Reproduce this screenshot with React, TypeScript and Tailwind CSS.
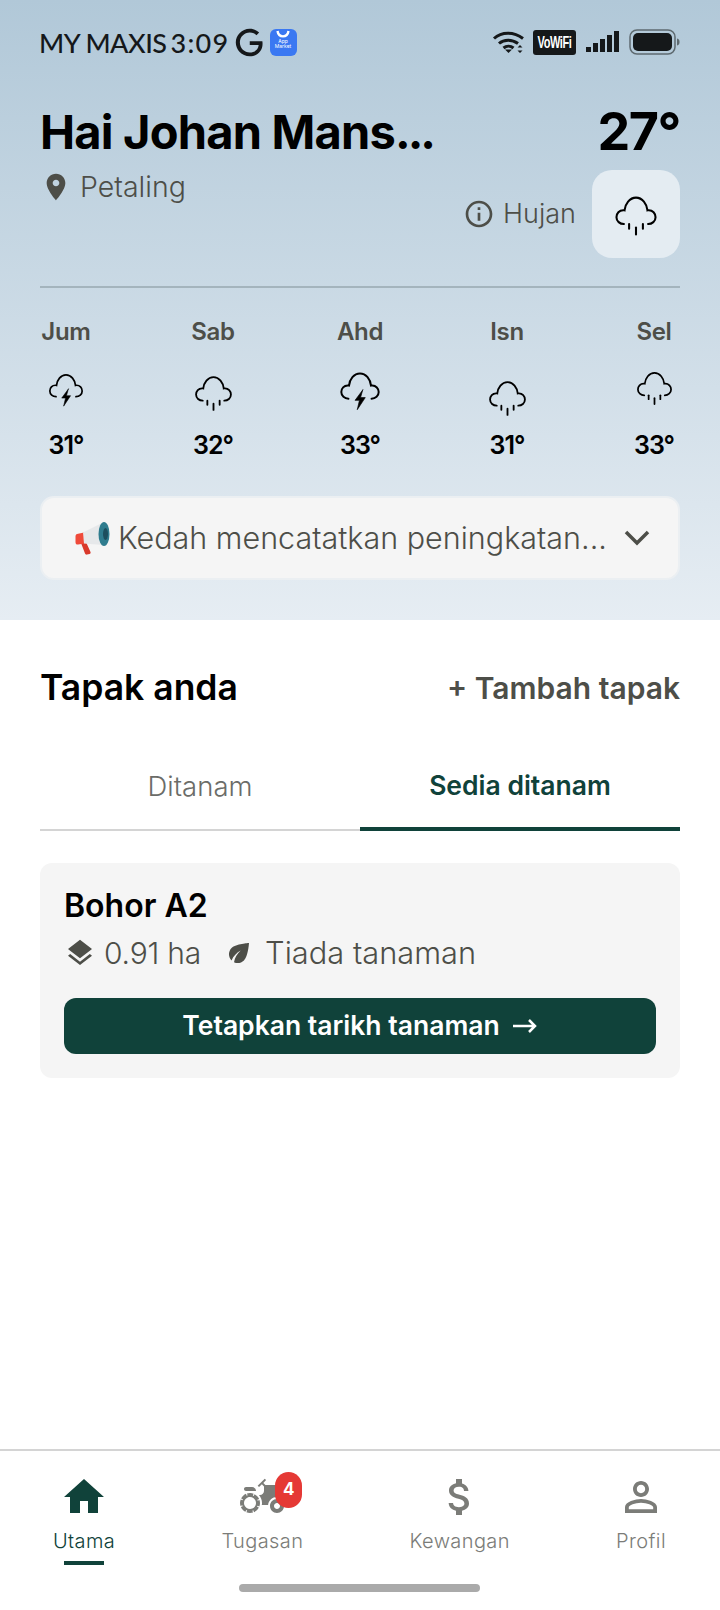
import React from 'react';

const INK = '#4d4e48';
const GREEN = '#10423a';

const PATHS = {
  pin: 'M12 2C8.13 2 5 5.13 5 9c0 5.25 7 13 7 13s7-7.75 7-13c0-3.87-3.13-7-7-7zm0 9.5c-1.38 0-2.5-1.12-2.5-2.5s1.12-2.5 2.5-2.5 2.5 1.12 2.5 2.5-1.12 2.5-2.5 2.5z',
  info: 'M11 7h2v2h-2zm0 4h2v6h-2zm1-9C6.48 2 2 6.48 2 12s4.48 10 10 10 10-4.48 10-10S17.52 2 12 2zm0 18c-4.41 0-8-3.59-8-8s3.59-8 8-8 8 3.59 8 8-3.59 8-8 8z',
  layers: 'M11.99 18.54l-7.37-5.73L3 14.07l9 7 9-7-1.63-1.27-7.38 5.74zM12 16l7.36-5.73L21 9l-9-7-9 7 1.63 1.27L12 16z',
  leaf: 'M6.05 8.05c-2.73 2.73-2.73 7.15-.02 9.88 1.47-3.4 4.09-6.24 7.36-7.93-2.77 2.34-4.71 5.61-5.39 9.32 2.6 1.23 5.8.78 7.95-1.37C19.43 14.47 20 4 20 4S9.53 4.57 6.05 8.05z',
  home: 'M10 20v-6h4v6h5v-8h3L12 3 2 12h3v8z',
  money: 'M11.8 10.9c-2.27-.59-3-1.2-3-2.15 0-1.09 1.01-1.85 2.7-1.85 1.78 0 2.44.85 2.5 2.1h2.21c-.07-1.72-1.12-3.3-3.21-3.81V3h-3v2.16c-1.94.42-3.5 1.68-3.5 3.61 0 2.31 1.91 3.46 4.7 4.13 2.5.6 3 1.48 3 2.41 0 .69-.49 1.79-2.7 1.79-2.06 0-2.87-.92-2.98-2.1h-2.2c.12 2.19 1.76 3.42 3.68 3.83V21h3v-2.15c1.95-.37 3.5-1.5 3.5-3.55 0-2.84-2.43-3.81-4.7-4.4z',
  person: 'M12 5.9c1.16 0 2.1.94 2.1 2.1s-.94 2.1-2.1 2.1S9.9 9.16 9.9 8s.94-2.1 2.1-2.1m0 9c2.97 0 6.1 1.46 6.1 2.1v1.1H5.9V17c0-.64 3.13-2.1 6.1-2.1M12 4C9.79 4 8 5.79 8 8s1.79 4 4 4 4-1.79 4-4-1.79-4-4-4zm0 9c-2.67 0-8 1.34-8 4v3h16v-3c0-2.66-5.33-4-8-4z',
  tractor: 'M19.5 12c.93 0 1.78.28 2.5.76V8c0-1.1-.9-2-2-2h-6.29l-1.06-1.06 1.41-1.41-.71-.71-3.53 3.53.71.71 1.41-1.41L13 6.71V9c0 1.1-.9 2-2 2h-.54c.95 1.06 1.54 2.46 1.54 4 0 .34-.04.67-.09 1h3.14c.25-2.25 2.14-4 4.45-4zM19.5 13c-1.93 0-3.5 1.57-3.5 3.5s1.57 3.5 3.5 3.5 3.5-1.57 3.5-3.5-1.57-3.5-3.5-3.5zm0 5c-.83 0-1.5-.67-1.5-1.5s.67-1.5 1.5-1.5 1.5.67 1.5 1.5-.67 1.5-1.5 1.5zM4 9h5c0-1.1-.9-2-2-2H4c-.55 0-1 .45-1 1s.45 1 1 1zM9.83 13.82l-.18-.47.93-.35c-.46-1.06-1.28-1.91-2.31-2.43l-.4.89-.46-.21.4-.9C7.26 10.13 6.64 10 6 10c-.53 0-1.04.11-1.52.26l.34.91-.47.18L4 10.42c-1.06.46-1.91 1.28-2.43 2.31l.89.4-.21.46-.9-.4C1.13 13.74 1 14.36 1 15c0 .53.11 1.04.26 1.52l.91-.34.18.47-.93.35c.46 1.06 1.28 1.91 2.31 2.43l.4-.89.46.21-.4.9c.55.22 1.17.35 1.81.35.53 0 1.04-.11 1.52-.26l-.34-.91.47-.18.35.93c1.06-.46 1.91-1.28 2.43-2.31l-.89-.4.21-.46.9.4c.22-.55.35-1.17.35-1.81 0-.53-.11-1.04-.26-1.52l-.91.34zm-2.68 3.95c-1.53.63-3.29-.09-3.92-1.62-.63-1.53.09-3.29 1.62-3.92 1.53-.63 3.29.09 3.92 1.62.64 1.53-.09 3.29-1.62 3.92z',
  google: 'M21.35 11.1h-9.17v2.73h6.51c-.33 3.81-3.5 5.44-6.5 5.44C8.36 19.27 5 16.25 5 12c0-4.1 3.2-7.27 7.2-7.27 3.09 0 4.9 1.97 4.9 1.97L19 4.72S16.56 2 12.1 2C6.42 2 2.03 6.8 2.03 12c0 5.05 4.13 10 10.22 10 5.35 0 9.25-3.67 9.25-9.09 0-1.15-.15-1.81-.15-1.81z',
};

const Glyph = ({ d, size, color, className }: { d: string; size: number; color: string; className?: string }) => (
  <svg viewBox="0 0 24 24" width={size} height={size} fill={color} className={className}>
    <path d={d} />
  </svg>
);

// open-bottomed cloud, with rain or a bolt under it
const Cloud = ({ kind, size, className }: { kind: 'rain' | 'bolt'; size: number; className?: string }) => (
  <svg viewBox="0 0 40 40" width={size} height={size} fill="none" stroke="#000" strokeWidth="1.8" strokeLinecap="round" className={className}>
    <path d="M9.500 27C6 27 3 24.500 3 21c0-3.300 2.500-6 5.800-6 .4 0 .8 0 1.200.1C10.500 9.500 14.500 4 20 4c5.500 0 9.500 5.500 10 11.100.4-.1.800-.1 1.200-.1 3.200 0 5.800 2.700 5.800 6 0 3.500-3 6-6.500 6" />
    {kind === 'rain' ? (
      <>
        <path d="M14 27v4" />
        <path d="M20 30v6" />
        <path d="M26 27v4" />
      </>
    ) : (
      <path d="M22.500 19l-7 9.500h4L17.500 37l7.300-11h-4.300l2-7z" fill="#000" strokeWidth="0.6" strokeLinejoin="round" />
    )}
  </svg>
);

const StatusBar = () => (
  <div className="flex items-center justify-between h-[30px] ml-[-1px]">
    <div className="flex items-center">
      <span className="font-['Lato',sans-serif] text-[27px] leading-none font-medium text-[#15181a] tracking-[-0.5px]">MY MAXIS</span>
      <span className="ml-[4px] font-['Lato',sans-serif] text-[27px] leading-none font-medium text-[#15181a] tracking-[1.3px]">3:09</span>
      <Glyph d={PATHS.google} size={33} color="#15181a" className="ml-[3px]" />
      <div className="ml-[4px] w-[27px] h-[27px] rounded-[6px] bg-[#3a78f2] flex flex-col items-center overflow-hidden">
        <svg width="14" height="9" viewBox="0 0 14 9" fill="none" stroke="#fff" strokeWidth="2.4" className="mt-[1px]">
          <path d="M1.5 1c.6 3.6 3 5.4 5.5 5.4S11.900 4.600 12.500 1" />
        </svg>
        <span className="text-[5px] leading-[5px] text-white text-center font-['Inter',sans-serif] w-[20px]">App Market</span>
      </div>
    </div>
    <div className="flex items-center">
      <svg width="34" height="26" viewBox="0 0 34 26" fill="none" stroke="#15181a" strokeWidth="3">
        <path d="M2 9.500C9.500 2.500 22 2.500 31 9.500" />
        <path d="M7 14.500c5-4.500 13-4.500 19 0" />
        <path d="M11.500 19c3-2.500 7-2.500 10 0" />
        <path d="M13 20.500l3.500 3.500 3.500-3.500z" fill="#15181a" stroke="none" />
        <path d="M28 16l2.500 2.500h-5zM28 24l2.500-2.500h-5z" fill="#15181a" stroke="none" />
      </svg>
      <div className="ml-[7px] w-[43px] h-[25px] rounded-[3px] bg-[#15181a] flex items-center justify-center">
        <span className="font-['Liberation_Sans',sans-serif] font-bold text-[11px] leading-none text-white tracking-[-0.4px] scale-y-[1.5]">VoWiFi</span>
      </div>
      <svg width="34" height="22" viewBox="0 0 34 22" fill="#15181a" className="ml-[10px]">
        <rect x="0" y="16" width="5" height="5" />
        <rect x="7" y="12" width="5" height="9" />
        <rect x="14" y="8" width="5" height="13" />
        <rect x="21" y="4" width="5" height="17" />
        <rect x="28" y="0" width="5" height="21" />
      </svg>
      <svg width="51" height="26" viewBox="0 0 51 26" className="ml-[9px]">
        <rect x="1" y="1" width="45" height="24" rx="7" fill="none" stroke="#5e6a70" strokeWidth="1.500" />
        <rect x="4" y="4" width="39" height="18" rx="5" fill="#15181a" />
        <path d="M48 9.500c2 .6 2.500 1.800 2.500 3.500s-.5 2.900-2.500 3.500z" fill="#5e6a70" />
      </svg>
    </div>
  </div>
);

const FORECAST: { day: string; temp: string; kind: 'rain' | 'bolt'; size: number; offset: string }[] = [
  { day: 'Jum', temp: '31°', kind: 'bolt', size: 38, offset: 'mt-[0px]' },
  { day: 'Sab', temp: '32°', kind: 'rain', size: 41, offset: 'mt-[2px]' },
  { day: 'Ahd', temp: '33°', kind: 'bolt', size: 44, offset: 'mt-[-2px]' },
  { day: 'Isn', temp: '31°', kind: 'rain', size: 41, offset: 'mt-[7px]' },
  { day: 'Sel', temp: '33°', kind: 'rain', size: 39, offset: 'mt-[-2px]' },
];

const Megaphone = () => (
  <svg width="35" height="34" viewBox="0 0 35 34" className="shrink-0">
    <path d="M6 22l5-1 4.500 10c.4 1-.1 1.800-1 2l-2.500.6c-1 .2-1.700-.2-2-1.100z" fill="#d9392b" />
    <path d="M2 13l7-1.500 1 11-7 1c-1.500.2-2.500-.8-2.500-2.300v-6c0-1.200.8-2 1.500-2.200z" fill="#ef4a3a" />
    <path d="M8 11.500L27 2l1 22-19-1.500z" fill="#e6e8ea" />
    <ellipse cx="29" cy="13" rx="5.500" ry="12" fill="#2f7c8e" />
    <ellipse cx="30.500" cy="13" rx="2.500" ry="6" fill="#1d4f5e" />
  </svg>
);

const TABS = [
  { label: 'Tugasan', d: PATHS.tractor, badge: '4' },
  { label: 'Kewangan', d: PATHS.money },
  { label: 'Profil', d: PATHS.person },
];

export default function App() {
  return (
    <div className="w-[720px] h-[1610px] bg-white flex flex-col font-['Inter',sans-serif] overflow-hidden">
      <div className="h-[620px] px-10 pt-[27px] bg-gradient-to-b from-[#b1c8d8] to-[#e6edf3]">
        <StatusBar />

        <div className="flex justify-between mt-[47px]">
          <div>
            <div className="text-[47px] leading-[56px] font-bold text-black tracking-[-0.8px]">
              Hai Johan Mans<span className="tracking-[-3px]">...</span>
            </div>
            <div className="flex items-center mt-[9px]">
              <Glyph d={PATHS.pin} size={32} color={INK} />
              <span className="ml-[8px] text-[28.500px] leading-[36px] font-light text-[#4d4e48]">Petaling</span>
            </div>
          </div>
          <div className="flex flex-col items-end">
            <div className="text-[52px] leading-[56px] font-bold text-black tracking-[-1.5px]">27°</div>
            <div className="flex items-center mt-[10px]">
              <Glyph d={PATHS.info} size={32} color={INK} />
              <span className="ml-[8px] text-[27px] leading-[36px] font-light text-[#4d4e48]">Hujan</span>
              <div className="ml-[16px] w-[88px] h-[88px] rounded-[20px] bg-[#e4ecf2] flex items-center justify-center">
                <Cloud kind="rain" size={46} className="mt-[4px]" />
              </div>
            </div>
          </div>
        </div>

        <div className="mt-[28px] border-t-2 border-[#a4b4bd]" />

        <div className="flex justify-between mt-[29px]">
          {FORECAST.map(f => (
            <div key={f.day} className="w-[52px] flex flex-col items-center">
              <span className="text-[24px] leading-[30px] font-semibold text-[#4d4e48] whitespace-nowrap tracking-[-0.3px]">{f.day}</span>
              <div className="h-[57px] mt-[24px]">
                <Cloud kind={f.kind} size={f.size} className={f.offset} />
              </div>
              <span className="text-[25px] leading-[30px] font-semibold text-black mt-[2px] tracking-[-1px]">{f.temp}</span>
            </div>
          ))}
        </div>

        <div className="mt-[36px] h-[84px] rounded-[14px] bg-[#f5f5f5] border-2 border-[#ebeff2] flex items-center pl-[33px] pr-[27px]">
          <Megaphone />
          <span className="ml-[8px] text-[30.500px] leading-[40px] font-light text-[#4d4e48] whitespace-nowrap">Kedah mencatatkan peningkatan...</span>
          <svg width="28" height="18" viewBox="0 0 28 18" fill="none" stroke={INK} strokeWidth="3.500" className="ml-auto shrink-0">
            <path d="M3 3l11 11L25 3" />
          </svg>
        </div>
      </div>

      <div className="px-10 flex-1">
        <div className="flex items-center justify-between mt-[45px]">
          <span className="text-[35.500px] leading-[46px] font-semibold text-black">Tapak anda</span>
          <span className="text-[30px] leading-[40px] font-semibold text-[#4d4e48]">+ Tambah tapak</span>
        </div>

        <div className="flex mt-[37px]">
          <div className="flex-1 h-[83px] pb-[3px] flex items-center justify-center border-b-2 border-[#d4d4d4] text-[27.500px] font-light text-[#6b6c68]">Ditanam</div>
          <div className="flex-1 h-[83px] pb-[3px] flex items-center justify-center border-b-4 border-[#10423a] text-[26.500px] font-semibold text-[#10423a]">Sedia ditanam</div>
        </div>

        <div className="mt-[32px] rounded-[12px] bg-[#f5f5f5] px-6 pt-[22px] pb-[24px]">
          <div className="text-[32px] leading-[42px] font-semibold text-black">Bohor A2</div>
          <div className="flex items-center mt-[6px]">
            <Glyph d={PATHS.layers} size={32} color={INK} />
            <span className="ml-[8px] text-[30px] leading-[40px] font-light text-[#4d4e48] tracking-[-0.2px]">0.91 ha</span>
            <Glyph d={PATHS.leaf} size={30} color={INK} className="ml-[23px]" />
            <span className="ml-[11px] text-[30.800px] leading-[40px] font-light text-[#4d4e48]">Tiada tanaman</span>
          </div>
          <div className="mt-[25px] h-[56px] rounded-[12px] flex items-center justify-center text-[26.500px] font-semibold text-white bg-[#10423a]">
            Tetapkan tarikh tanaman
            <svg width="26" height="16" viewBox="0 0 26 16" fill="none" stroke="#fff" strokeWidth="2.500" className="ml-[12px]">
              <path d="M1 8h22M17 2l6 6-6 6" />
            </svg>
          </div>
        </div>
      </div>

      <div className="h-[161px] border-t-2 border-[#d4d4d4] relative">
        <div className="flex justify-between pl-[53px] pr-[54px] pt-[22px]">
          <div className="flex flex-col items-center">
            <Glyph d={PATHS.home} size={48} color={GREEN} />
            <span className="mt-[6px] text-[20px] leading-[28px] font-light tracking-[0.4px] text-[#10423a]">Utama</span>
            <div className="mt-[6px] w-[40px] h-[4px] bg-[#10423a]" />
          </div>
          {TABS.map(t => (
            <div key={t.label} className="flex flex-col items-center">
              <div className="relative">
                <Glyph d={t.d} size={48} color="#7b7c78" />
                {t.badge && (
                  <div className="absolute top-[-1px] left-[37px] w-[27px] h-[36px] rounded-full bg-[#e53935] flex items-center justify-center text-[17px] font-bold text-white">
                    {t.badge}
                  </div>
                )}
              </div>
              <span className="mt-[6px] text-[20px] leading-[28px] font-light tracking-[0.4px] text-[#7b7c78]">{t.label}</span>
            </div>
          ))}
        </div>
        <div className="absolute bottom-[18px] left-[239px] w-[241px] h-[8px] rounded-full bg-[#aaaaaa]" />
      </div>
    </div>
  );
}
